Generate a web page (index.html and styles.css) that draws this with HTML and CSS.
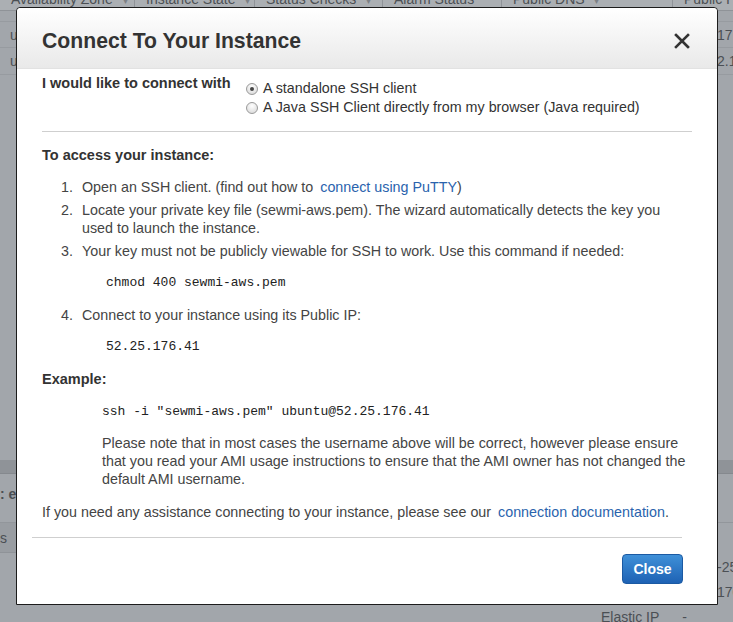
FILE: index.html
```html
<!DOCTYPE html>
<html>
<head>
<meta charset="utf-8">
<link rel="stylesheet" href="styles.css">
</head>
<body>
<div class="bg">
  <div class="thead">
    <div class="th w1">Availability Zone <span class="caret">▾</span></div>
    <div class="th w2">Instance State <span class="caret">▾</span></div>
    <div class="th w3">Status Checks <span class="caret">▾</span></div>
    <div class="th w4">Alarm Status</div>
    <div class="th w5">Public DNS <span class="caret">▾</span></div>
    <div class="th w6">Public I</div>
  </div>
  <div class="trow first"><span>u</span><span class="tail">17</span></div>
  <div class="trow"><span>u</span><span class="tail">2.1</span></div>
  <div class="spacer"></div>
  <div class="band"></div>
  <div class="desc">: e</div>
  <div class="tabs">s</div>
  <div class="drow"><span class="tail">-25</span></div>
  <div class="drow"><span class="tail">170</span></div>
  <div class="drow last"><span class="lbl">Elastic IP</span><span class="dash">-</span></div>
</div>

<div class="modal">
  <div class="modal-header">
    <h2 class="title">Connect To Your Instance</h2>
    <svg class="close-x" width="16" height="16" viewBox="0 0 16 16"><path d="M2 2 L14 14 M14 2 L2 14" stroke="#333" stroke-width="2.6" stroke-linecap="square" fill="none"/></svg>
  </div>
  <div class="modal-body">
    <div class="connect-row">
      <div class="connect-label">I would like to connect with</div>
      <div class="radios">
        <label class="radio"><span class="rb checked"></span>A standalone SSH client</label>
        <label class="radio"><span class="rb"></span>A Java SSH Client directly from my browser (Java required)</label>
      </div>
    </div>
    <div class="rule"></div>
    <div class="heading access">To access your instance:</div>
    <ol class="steps">
      <li class="step"><span class="num">1.</span><span class="txt">Open an SSH client. (find out how to <a class="link">connect using PuTTY</a>)</span></li>
      <li class="step"><span class="num">2.</span><span class="txt">Locate your private key file (sewmi-aws.pem). The wizard automatically detects the key you used to launch the instance.</span></li>
      <li class="step"><span class="num">3.</span><span class="txt">Your key must not be publicly viewable for SSH to work. Use this command if needed:</span></li>
    </ol>
    <div class="code c1">chmod 400 sewmi-aws.pem</div>
    <ol class="steps s4">
      <li class="step"><span class="num">4.</span><span class="txt">Connect to your instance using its Public IP:</span></li>
    </ol>
    <div class="code c1 ip">52.25.176.41</div>
    <div class="heading example">Example:</div>
    <div class="code c2">ssh -i "sewmi-aws.pem" ubuntu@52.25.176.41</div>
    <p class="note">Please note that in most cases the username above will be correct, however please ensure that you read your AMI usage instructions to ensure that the AMI owner has not changed the default AMI username.</p>
    <p class="help">If you need any assistance connecting to your instance, please see our <a class="link">connection documentation</a>.</p>
  </div>
  <div class="modal-footer">
    <button class="btn-close">Close</button>
  </div>
</div>
</body>
</html>
```

FILE: styles.css
```css
* { box-sizing: border-box; }
html, body { margin: 0; padding: 0; }
body {
  width: 733px;
  height: 622px;
  overflow: hidden;
  background: #a2a6ab;
  font-family: "Liberation Sans", Arial, sans-serif;
  font-size: 14.3px;
  color: #333;
  position: relative;
}

/* background page (dimmed) */
.bg { color: #4b4f54; font-size: 14px; }
.thead {
  display: flex;
  margin-top: -13px;
  height: 24px;
  line-height: 24px;
  background: #abafb3;
  border-bottom: 1px solid #8f9398;
  white-space: nowrap;
  overflow: hidden;
}
.th { padding-left: 11px; border-right: 1px solid #8f9398; flex: none; }
.caret { font-size: 10px; margin-left: 6px; color: #7c8085; }
.w1 { width: 135px; }
.w2 { width: 120px; }
.w3 { width: 128px; }
.w4 { width: 119px; }
.w5 { width: 171px; }
.w6 { width: 60px; border-right: 0; }
.trow {
  display: flex;
  justify-content: space-between;
  height: 27px;
  line-height: 27px;
  padding-left: 10px;
  border-bottom: 1px solid #979ba0;
  white-space: nowrap;
}
.trow.first { margin-top: 10px; border-top: 1px solid #979ba0; }
.tail { width: 16px; overflow: hidden; white-space: nowrap; }
.spacer { height: 385px; }
.band { height: 14px; background: #8f9398; border-bottom: 1px solid #85898e; }
.desc {
  height: 49px;
  line-height: 34px;
  padding-top: 3px;
  font-weight: bold;
  white-space: nowrap;
  border-bottom: 1px solid #92969b;
}
.tabs {
  width: 16px;
  height: 30px;
  line-height: 30px;
  background: #999da2;
  border-bottom: 1px solid #8f9398;
}
.drow {
  display: flex;
  justify-content: flex-end;
  height: 25px;
  line-height: 25px;
  white-space: nowrap;
}
.tabs + .drow { margin-top: 2px; }
.drow.last { justify-content: flex-start; padding-left: 601px; }
.drow.last .dash { margin-left: 23px; }

/* modal */
.modal {
  position: absolute;
  left: 16px;
  top: 7px;
  width: 702px;
  height: 598px;
  background: #fff;
  border: 1px solid #1c1c1c;
  border-radius: 4px 4px 0 0;
  display: flex;
  flex-direction: column;
}
.modal-header {
  height: 61px;
  flex: none;
  display: flex;
  align-items: center;
  justify-content: space-between;
  padding: 0 27px 0 25px;
  background: linear-gradient(#ffffff, #e9e9e9);
  border-bottom: 1px solid #e2e2e2;
  border-radius: 4px 4px 0 0;
}
.title {
  margin: 0;
  font-size: 21.2px;
  font-weight: bold;
  color: #333;
  padding-top: 5px;
}
.close-x { margin-top: 6px; }

.modal-body { padding: 0 25px; flex: none; }
.connect-row { display: flex; margin-top: 5px; }
.connect-label {
  width: 204px;
  font-weight: bold;
  font-size: 14.5px;
  line-height: 18px;
  flex: none;
  color: #333;
}
.radios { padding-top: 5px; display: flex; flex-direction: column; }
.radio {
  display: flex;
  align-items: center;
  line-height: 19px;
  height: 19px;
  color: #333;
}
.rb {
  width: 12px;
  height: 12px;
  border-radius: 50%;
  border: 1px solid #9a9a9a;
  background: radial-gradient(circle at 50% 30%, #ffffff, #d5d5d5);
  margin-right: 5px;
  position: relative;
  flex: none;
}
.rb.checked::after {
  content: "";
  position: absolute;
  left: 3px;
  top: 3px;
  width: 4px;
  height: 4px;
  border-radius: 50%;
  background: #444;
}
.rule { height: 1px; background: #cfcfcf; margin-top: 14px; }
.heading { font-weight: bold; font-size: 14.5px; line-height: 18px; color: #333; }
.access { margin-top: 14px; }
.steps { list-style: none; margin: 14px 10px 0 0; padding: 0; }
.step { display: flex; line-height: 18px; margin-bottom: 5px; color: #444; }
.step:last-child { margin-bottom: 0; }
.num { width: 31px; text-align: right; flex: none; margin-right: 9px; }
.txt { flex: 1; }
.link { color: #2a63ad; text-decoration: none; margin-left: 3px; }
.code {
  font-family: "Liberation Mono", "DejaVu Sans Mono", monospace;
  font-size: 13px;
  line-height: 18px;
  color: #222;
}
.c1 { margin-top: 14px; padding-left: 64px; }
.s4 { margin-top: 14px; }
.c1.ip { margin-top: 14px; }
.example { margin-top: 14px; }
.c2 { margin-top: 15px; padding-left: 60px; }
.note { margin: 13px 0 0; padding-left: 60px; line-height: 18px; color: #444; }
.help { margin: 15px 0 0; line-height: 18px; color: #444; }

.modal-footer {
  margin: 16px 35px 0 15px;
  border-top: 1px solid #cfcfcf;
  padding-top: 16px;
  display: flex;
  justify-content: flex-end;
}
.btn-close {
  width: 61px;
  height: 30px;
  border: 1px solid #1b5aa3;
  border-radius: 4px;
  background: linear-gradient(#3f90d8, #1e62b4);
  color: #fff;
  font-family: "Liberation Sans", Arial, sans-serif;
  font-weight: bold;
  font-size: 14px;
  padding: 0;
  margin-right: -1px;
}
```
